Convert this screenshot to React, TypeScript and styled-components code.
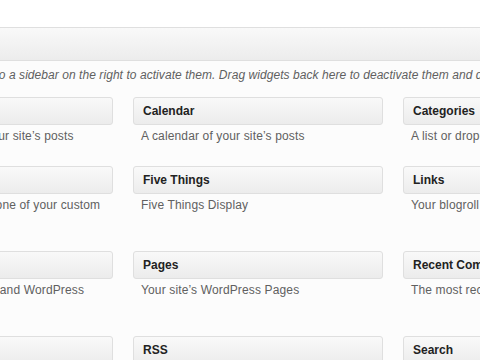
import React from 'react'
import styled, { createGlobalStyle } from 'styled-components'

const GlobalStyle = createGlobalStyle`
  html, body {
    margin: 0;
    padding: 0;
    background: #ffffff;
  }
  body {
    font-family: "Liberation Sans", Arial, sans-serif;
    overflow: hidden;
  }
`

const Page = styled.div`
  width: 480px;
  height: 360px;
  overflow: hidden;
  background: #ffffff;
`

const TopSpace = styled.div`
  height: 27px;
  background: #ffffff;
`

const SidebarName = styled.div`
  height: 32px;
  border-top: 1px solid #dfdfdf;
  border-bottom: 1px solid #dfdfdf;
  background: linear-gradient(to bottom, #f9f9f9, #ececec);
`

const Holder = styled.div`
  background: #fcfcfc;
  height: 300px;
  padding-top: 6px;
`

const Inner = styled.div`
  margin-left: -137px;
  width: 820px;
`

const Intro = styled.p`
  margin: 0 0 14px;
  padding-left: 3px;
  font-size: 12px;
  line-height: 16px;
  font-style: italic;
  letter-spacing: 0.06px;
  color: #606060;
  white-space: nowrap;
`

const Grid = styled.div`
  display: grid;
  grid-template-columns: repeat(3, 250px);
  column-gap: 20px;
  row-gap: 22px;
  align-items: start;
`

const Widget = styled.div`
  width: 250px;
`

const WidgetTop = styled.div`
  box-sizing: border-box;
  height: 28px;
  border: 1px solid #dfdfdf;
  border-radius: 3px;
  background: linear-gradient(to bottom, #f9f9f9, #ececec);
  padding: 0 9px;
  display: flex;
  align-items: center;
`

const Title = styled.h4`
  margin: 0;
  font-size: 12px;
  font-weight: bold;
  color: #222222;
  white-space: nowrap;
`

const Description = styled.div`
  padding: 3px 4px 0 8px;
  font-size: 12px;
  line-height: 16px;
  letter-spacing: 0.14px;
  color: #606060;
`

type Item = { title: string; desc: string }

const widgets: Item[] = [
  { title: 'Archives', desc: 'A monthly archive of your site\u2019s posts' },
  { title: 'Calendar', desc: 'A calendar of your site\u2019s posts' },
  { title: 'Categories', desc: 'A list or dropdown of categories' },
  { title: 'Custom Menu', desc: 'Use this widget to add one of your custom menus as a widget.' },
  { title: 'Five Things', desc: 'Five Things Display' },
  { title: 'Links', desc: 'Your blogroll' },
  { title: 'Meta', desc: 'Log in/out, admin, feed and WordPress links' },
  { title: 'Pages', desc: 'Your site\u2019s WordPress Pages' },
  { title: 'Recent Comments', desc: 'The most recent comments' },
  { title: 'Recent Posts', desc: 'The most recent posts on your site' },
  { title: 'RSS', desc: 'Entries from any RSS or Atom feed' },
  { title: 'Search', desc: 'A search form for your site' },
]

export default function App() {
  return (
    <Page>
      <GlobalStyle />
      <TopSpace />
      <SidebarName />
      <Holder>
        <Inner>
          <Intro>
            Drag widgets from here to a sidebar on the right to activate them. Drag widgets back here to deactivate them and delete their settings.
          </Intro>
          <Grid>
            {widgets.map((w) => (
              <Widget key={w.title}>
                <WidgetTop>
                  <Title>{w.title}</Title>
                </WidgetTop>
                <Description>{w.desc}</Description>
              </Widget>
            ))}
          </Grid>
        </Inner>
      </Holder>
    </Page>
  )
}
